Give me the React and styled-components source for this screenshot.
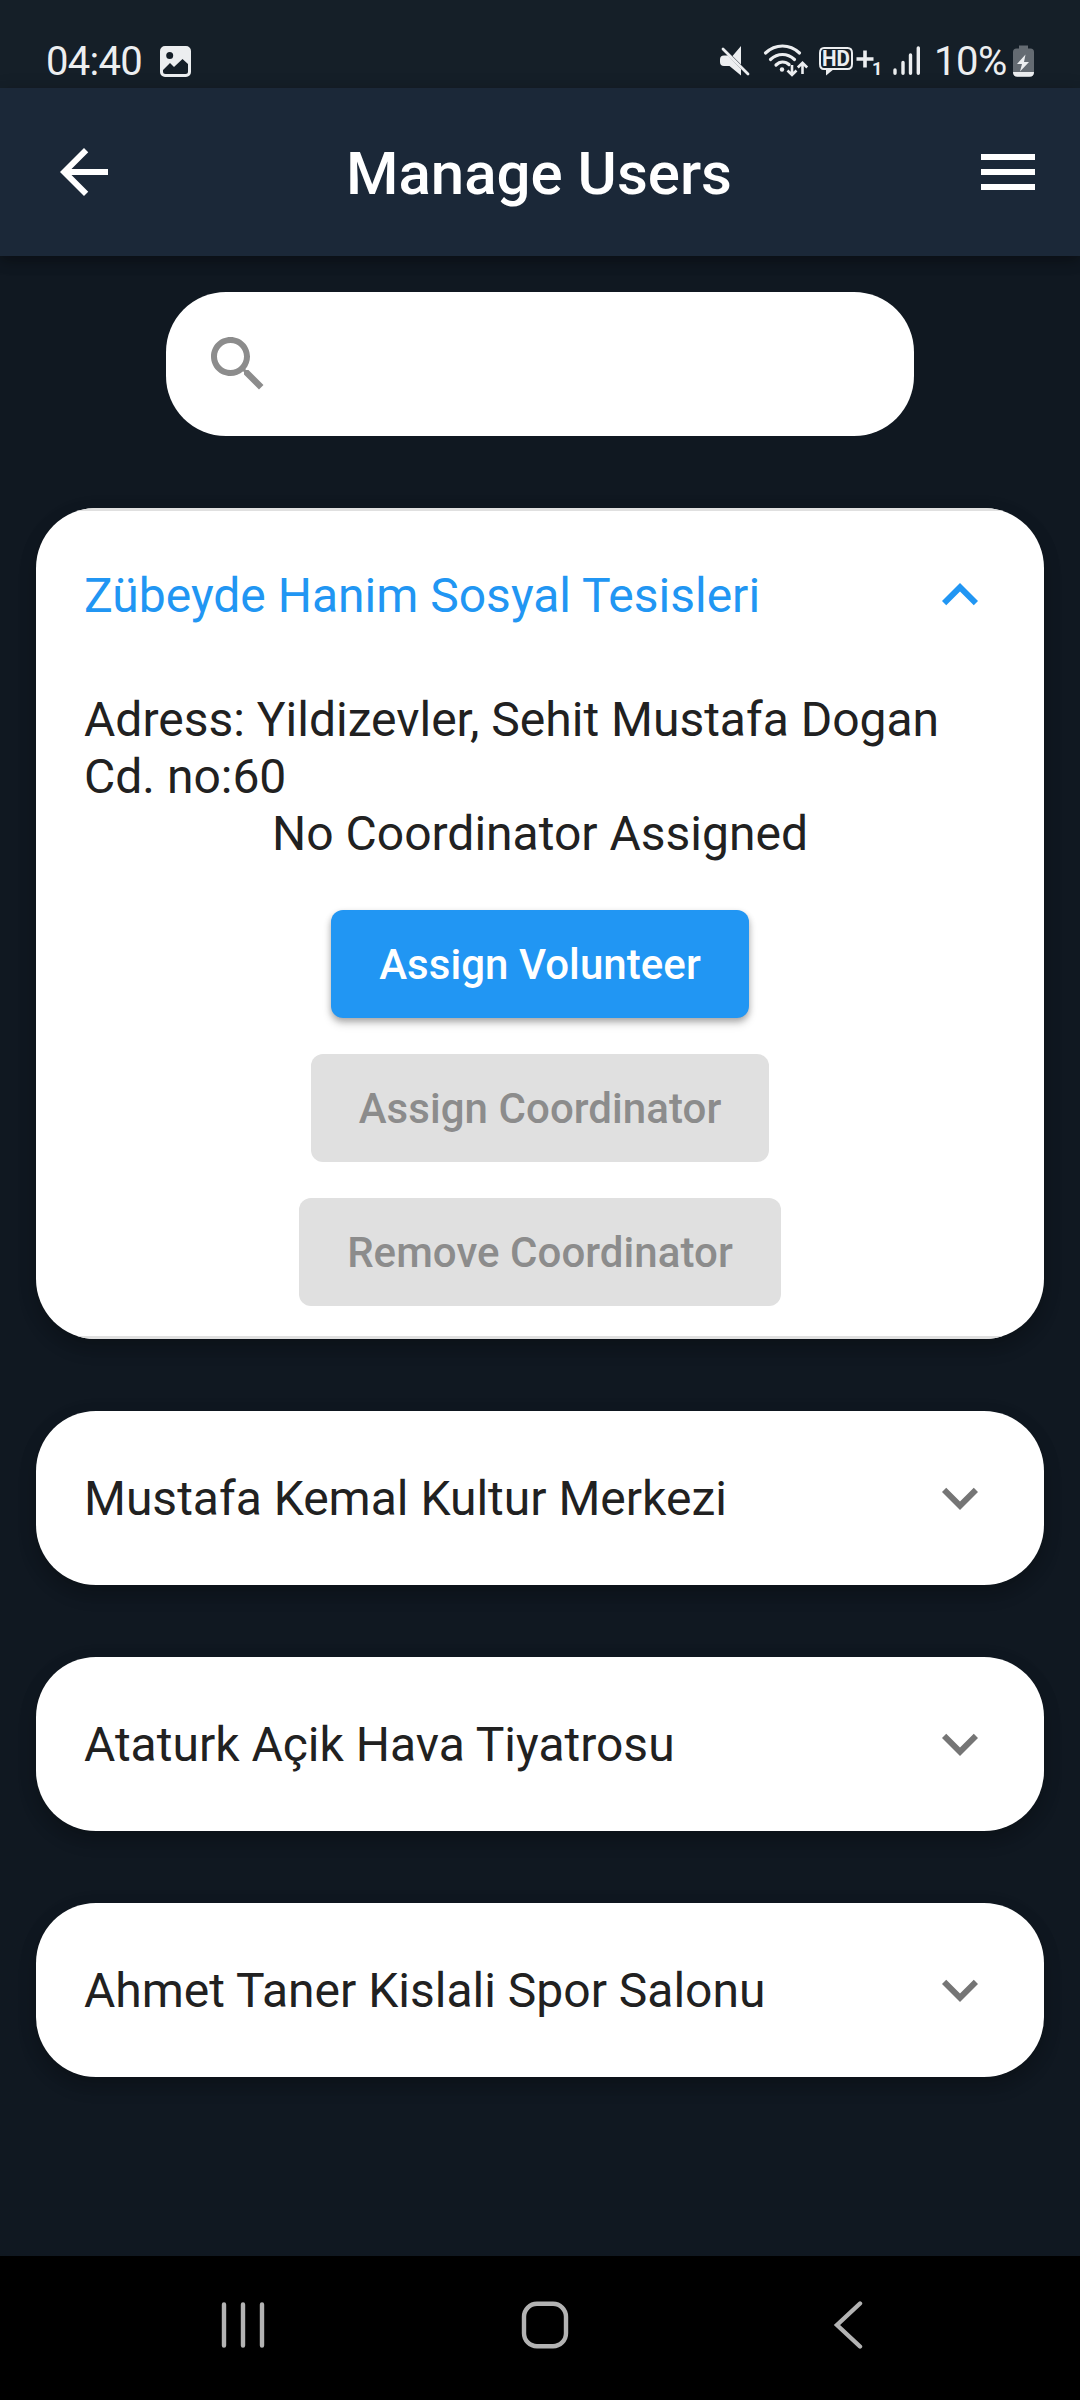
import React, { useState } from "react";
import styled, { createGlobalStyle } from "styled-components";

const GlobalStyle = createGlobalStyle`
  *, *::before, *::after { box-sizing: border-box; }
  body { margin: 0; background: #101821; }
  button { font: inherit; border: 0; background: none; padding: 0; margin: 0; }
  svg { display: block; flex: none; }
`;

const Screen = styled.div`
  width: 1080px;
  height: 2400px;
  display: flex;
  flex-direction: column;
  overflow: hidden;
  background: #101821;
  font-family: Roboto, "Noto Sans", sans-serif;
  font-size: 48px;
  color: #212121;
`;

const StatusBar = styled.header`
  flex: none;
  height: 88px;
  padding: 34px 46px 0;
  display: flex;
  justify-content: space-between;
  background: #151f28;
  color: #eceef0;
  font-size: 40px;
  line-height: 56px;
`;

const StatusGroup = styled.div`
  display: flex;
  height: 54px;
  gap: ${(p) => p.$gap}px;
`;

const StatusText = styled.span`
  letter-spacing: ${(p) => p.$tracking}px;
`;

const AppBar = styled.div`
  flex: none;
  height: 168px;
  padding: 0 36px 0 48px;
  display: flex;
  align-items: center;
  justify-content: space-between;
  background: #1b2838;
  color: #fff;
  box-shadow: 0 6px 12px rgba(0, 0, 0, 0.26), 0 2px 18px rgba(0, 0, 0, 0.12);
`;

const Title = styled.h1`
  margin: 0;
  flex: 1;
  text-align: center;
  font-size: 60px;
  line-height: 72px;
  font-weight: 500;
  padding: 4px 14px 0 0;
`;

const IconButton = styled.button`
  display: flex;
  color: inherit;
`;

const Body = styled.main`
  flex: 1;
  padding: 36px;
  display: flex;
  flex-direction: column;
  align-items: center;
`;

const SearchBox = styled.label`
  width: 748px;
  height: 144px;
  padding: 0 36px;
  display: flex;
  align-items: center;
  border-radius: 60px;
  background: #fff;
  color: #8c8c8c;
`;

const SearchInput = styled.input`
  flex: 1;
  min-width: 0;
  border: 0;
  outline: 0;
  background: none;
  font: inherit;
  color: #212121;
`;

const CardList = styled.section`
  align-self: stretch;
  margin-top: 72px;
  display: flex;
  flex-direction: column;
  gap: 72px;
`;

const Card = styled.article`
  border-radius: 60px;
  overflow: hidden;
  background: #fff;
  box-shadow: 0 9px 18px rgba(0, 0, 0, 0.22), 0 3px 20px rgba(0, 0, 0, 0.08);
`;

const Rule = styled.div`
  height: 3px;
  background: ${(p) => (p.$visible ? "#e0e0e0" : "transparent")};
`;

const CardHeader = styled.button`
  width: 100%;
  height: 168px;
  padding: 0 48px;
  display: flex;
  align-items: center;
  justify-content: space-between;
  text-align: left;
  color: ${(p) => (p.$open ? "#2196f3" : "#212121")};
`;

const ChevronBox = styled.span`
  display: flex;
  color: ${(p) => (p.$open ? "#2196f3" : "#757575")};
  transform: ${(p) => (p.$open ? "rotate(180deg)" : "none")};
`;

const CardBody = styled.div`
  padding: 12px 48px 30px;
  display: flex;
  flex-direction: column;
  align-items: center;
`;

const Line = styled.p`
  margin: 0;
  line-height: 57px;
  align-self: ${(p) => (p.$start ? "flex-start" : "center")};
`;

const Actions = styled.div`
  margin-top: 48px;
  display: flex;
  flex-direction: column;
  align-items: center;
  gap: 36px;
`;

const ActionButton = styled.button`
  height: 108px;
  padding: 0 48px;
  border-radius: 12px;
  font-size: 42px;
  font-weight: 500;
  letter-spacing: 0.06px;
  color: #fff;
  background: #2196f3;
  box-shadow: 0 3px 6px rgba(0, 0, 0, 0.26), 0 6px 10px rgba(0, 0, 0, 0.14);
  &:disabled {
    color: #8c8c8c;
    background: #e0e0e0;
    box-shadow: none;
  }
`;

const NavBar = styled.nav`
  flex: none;
  height: 144px;
  padding: 0 217px 6px 221px;
  display: flex;
  align-items: center;
  justify-content: space-between;
  background: #000;
  color: #b3b3b3;
`;

const NavButton = styled.button`
  display: flex;
  color: inherit;
  margin-right: ${(p) => p.$trail || 0}px;
`;

const Icon = ({ d, size = 72 }) => (
  <svg width={size} height={size} viewBox="0 0 24 24" fill="currentColor">
    <path d={d} />
  </svg>
);

const ARROW_BACK = "M20 11H7.83l5.59-5.59L12 4l-8 8 8 8 1.41-1.41L7.83 13H20v-2z";
const MENU = "M3 18h18v-2H3v2zm0-5h18v-2H3v2zm0-7v2h18V6H3z";
const SEARCH =
  "M15.5 14h-.79l-.28-.27C15.41 12.59 16 11.11 16 9.5 16 5.91 13.09 3 9.5 3S3 5.91 3 9.5 5.91 16 9.5 16c1.61 0 3.09-.59 4.23-1.57l.27.28v.79l5 4.99L20.49 19l-4.99-5zm-6 0C7.01 14 5 11.99 5 9.5S7.01 5 9.5 5 14 7.01 14 9.5 11.99 14 9.5 14z";
const EXPAND_MORE = "M16.59 8.59L12 13.17 7.41 8.59 6 10l6 6 6-6z";

const PictureIcon = () => (
  <svg width="31" height="54" viewBox="160 34 31 54">
    <path
      fill="currentColor"
      fillRule="evenodd"
      d="M165 46h21a5 5 0 0 1 5 5v21a5 5 0 0 1-5 5h-21a5 5 0 0 1-5-5V51a5 5 0 0 1 5-5zM169.700 52a3.500 3.500 0 1 0 0 7 3.500 3.500 0 0 0 0-7zM163 70v1.500a2.500 2.500 0 0 0 2.500 2.500h20a2.500 2.500 0 0 0 2.500-2.500V64l-5.500-5-8.500 8-4-4z"
    />
  </svg>
);

const StatusIcons = () => (
  <svg width="212" height="54" viewBox="716 34 212 54" fill="none" stroke="currentColor">
    {/* muted speaker */}
    <path fill="currentColor" stroke="none" d="M741 46v18.500L732.500 56zM724 55.500h4L741 69v6.500L729.500 66H724q-4 0-4-4v-2.500q0-4 4-4z" />
    <path strokeWidth="2.800" strokeLinecap="round" d="M723 49l25 25" />
    {/* wi-fi with traffic arrows */}
    <g strokeWidth="3.200" strokeLinecap="round">
      <path d="M765.500 53q7.500-7 17-7t17 7" />
      <path d="M770.500 59.500q5.500-5 12-5t12 5" />
      <path d="M776 65q3-3 6.500-3 4 0 6.500 2.500" />
    </g>
    <circle cx="782" cy="69.500" r="2.200" fill="currentColor" stroke="none" />
    <path strokeWidth="2.600" d="M792 65v10M787.500 70.500l4.500 4.500 4.500-4.500M802.500 74V63M797.800 67.500l4.700-4.700 4.700 4.700" />
    {/* HD call badge */}
    <path strokeWidth="2" strokeLinejoin="round" d="M824 48h23.500q4.500 0 4.500 5v11q0 5-4.500 5H824q-4 0-4-5V53q0-5 4-5z" />
    <path fill="currentColor" stroke="none" d="M826 69h8L826 75.500z" />
    <text x="822" y="66.300" fill="currentColor" stroke="none" fontSize="22" fontWeight="700" textLength="28" lengthAdjust="spacingAndGlyphs">HD</text>
    <path strokeWidth="3.600" d="M856.500 59h17M865 50.500v17" />
    <text x="872" y="75.300" fill="currentColor" stroke="none" fontSize="18" fontWeight="700">1</text>
    {/* signal bars */}
    <path strokeWidth="3.400" strokeLinecap="round" d="M895 70v3.300M903 62.500v10.800M910.500 55v18.300M918.300 48v25.300" />
  </svg>
);

const BatteryIcon = () => (
  <svg width="21" height="54" viewBox="1013 34 21 54">
    <path fill="#646b72" d="M1019 45.500h9v3h2.500q3.500 0 3.500 3.500v20q0 4.500-4.500 4.500h-12q-4.500 0-4.500-4.500V52q0-3.500 3.500-3.500h2.500z" />
    <path fill="currentColor" d="M1013 72h21q0 4.800-4.500 4.800h-12q-4.500 0-4.500-4.800zM1025.500 54.500l-8.500 9.500h5l-2 7.500 9-9.500h-5z" />
  </svg>
);

const VENUES = [
  { name: "Zübeyde Hanim Sosyal Tesisleri", address: "Yildizevler, Sehit Mustafa Dogan Cd. no:60" },
  { name: "Mustafa Kemal Kultur Merkezi" },
  { name: "Ataturk Açik Hava Tiyatrosu" },
  { name: "Ahmet Taner Kislali Spor Salonu" },
];

const VenueCard = ({ venue, open, onToggle }) => (
  <Card>
    <Rule $visible={open} />
    <CardHeader $open={open} onClick={onToggle}>
      <span>{venue.name}</span>
      <ChevronBox $open={open}>
        <Icon d={EXPAND_MORE} />
      </ChevronBox>
    </CardHeader>
    {open && (
      <CardBody>
        <Line $start>{`Adress: ${venue.address || ""}`}</Line>
        <Line>No Coordinator Assigned</Line>
        <Actions>
          <ActionButton>Assign Volunteer</ActionButton>
          <ActionButton disabled>Assign Coordinator</ActionButton>
          <ActionButton disabled>Remove Coordinator</ActionButton>
        </Actions>
      </CardBody>
    )}
    <Rule $visible={open} />
  </Card>
);

export default function App() {
  const [openIndex, setOpenIndex] = useState(0);
  return (
    <Screen>
      <GlobalStyle />
      <StatusBar>
        <StatusGroup $gap={17.5}>
          <StatusText $tracking={-0.7}>04:40</StatusText>
          <PictureIcon />
        </StatusGroup>
        <StatusGroup $gap={6}>
          <StatusIcons />
          <StatusText $tracking={-0.4}>10%</StatusText>
          <BatteryIcon />
        </StatusGroup>
      </StatusBar>
      <AppBar>
        <IconButton aria-label="Back"><Icon d={ARROW_BACK} /></IconButton>
        <Title>Manage Users</Title>
        <IconButton aria-label="Menu"><Icon d={MENU} /></IconButton>
      </AppBar>
      <Body>
        <SearchBox>
          <Icon d={SEARCH} />
          <SearchInput aria-label="Search" />
        </SearchBox>
        <CardList>
          {VENUES.map((venue, i) => (
            <VenueCard
              key={venue.name}
              venue={venue}
              open={i === openIndex}
              onToggle={() => setOpenIndex(i === openIndex ? -1 : i)}
            />
          ))}
        </CardList>
      </Body>
      <NavBar>
        <NavButton aria-label="Recents">
          <svg width="44" height="48" viewBox="0 0 44 48" stroke="currentColor" strokeWidth="4.400" strokeLinecap="round">
            <path d="M3 3.500v41M22 3.500v41M41 3.500v41" />
          </svg>
        </NavButton>
        <NavButton aria-label="Home" $trail={8}>
          <svg width="48" height="48" viewBox="0 0 48 48" fill="none" stroke="currentColor" strokeWidth="4.400">
            <rect x="3" y="2.800" width="42" height="42.400" rx="13" />
          </svg>
        </NavButton>
        <NavButton aria-label="Back">
          <svg width="30" height="48" viewBox="0 0 30 48" fill="none" stroke="currentColor" strokeWidth="4.400" strokeLinecap="round">
            <path d="M27 2.500L4 24l23 21.500" />
          </svg>
        </NavButton>
      </NavBar>
    </Screen>
  );
}
